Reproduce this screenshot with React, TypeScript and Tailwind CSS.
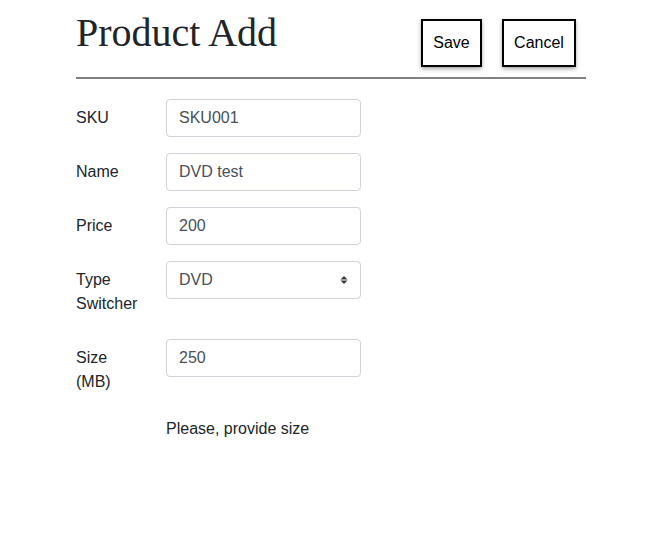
export default function App() {
  const rowLabel = "w-[90px] shrink-0 pt-[7px] pb-[7px] leading-6 text-[16px] text-[#212529]";
  const input = "w-[195px] h-[38px] border border-[#ced4da] rounded-[4px] pl-[12px] pr-3 flex items-center text-[16px] text-[#495057] bg-white";
  return (
    <div className="w-[662px] h-[543px] bg-white" style={{ fontFamily: '"Liberation Sans", Arial, sans-serif' }}>
      <div className="ml-[76px] w-[510px]">
        <div className="flex items-start justify-between h-[77px]">
          <h1 className="mt-[9px] text-[40px] leading-[48px] text-[#212529]" style={{ fontFamily: '"Liberation Serif", "Times New Roman", serif' }}>Product Add</h1>
          <div className="flex gap-[20px] mt-[19px] mr-[10px]">
            <div className="h-[48px] w-[61px] border-2 border-black flex items-center justify-center text-[16px] text-black shadow-[0_2px_4px_rgba(0,0,0,0.35)]">Save</div>
            <div className="h-[48px] w-[74px] border-2 border-black flex items-center justify-center text-[16px] text-black shadow-[0_2px_4px_rgba(0,0,0,0.35)]">Cancel</div>
          </div>
        </div>
        <div className="h-[2px] bg-[#808080]" />
        <div className="mt-[20px] flex flex-col gap-[16px]">
          <div className="flex"><div className={rowLabel}>SKU</div><div className={input}>SKU001</div></div>
          <div className="flex"><div className={rowLabel}>Name</div><div className={input}>DVD test</div></div>
          <div className="flex"><div className={rowLabel}>Price</div><div className={input}>200</div></div>
          <div className="flex"><div className={rowLabel}>Type<br />Switcher</div>
            <div className={input + " justify-between"}>
              <span>DVD</span>
              <svg width="8" height="12" viewBox="0 0 8 12"><path d="M4 2 L7.5 5.5 H0.5 Z" fill="#343a40" /><path d="M4 10 L7.5 6.5 H0.5 Z" fill="#343a40" /></svg>
            </div>
          </div>
          <div className="flex"><div className={rowLabel}>Size<br />(MB)</div><div className={input}>250</div></div>
          <div className="pl-[90px] leading-6 text-[16px] text-[#212529]">Please, provide size</div>
        </div>
      </div>
    </div>
  );
}
